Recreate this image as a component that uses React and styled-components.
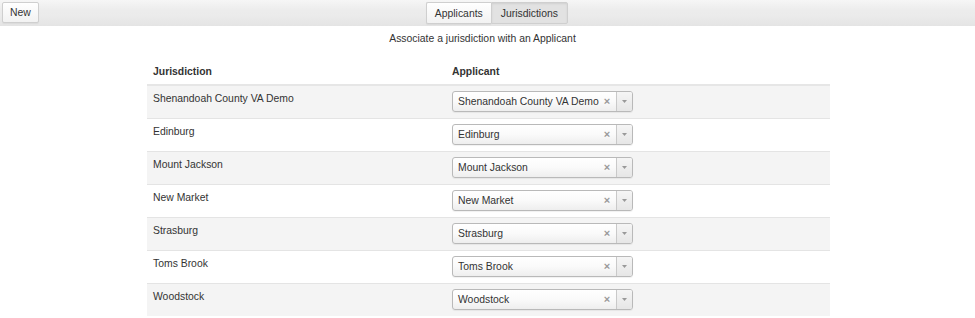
import styled, { createGlobalStyle } from "styled-components";

const GlobalStyle = createGlobalStyle`
  html, body {
    margin: 0;
    padding: 0;
    background: #fff;
  }
  body {
    font-family: "Liberation Sans", Arial, Helvetica, sans-serif;
    font-size: 10.4px;
    color: #333;
  }
`;

const rows = [
  "Shenandoah County VA Demo",
  "Edinburg",
  "Mount Jackson",
  "New Market",
  "Strasburg",
  "Toms Brook",
  "Woodstock",
];

const Styled = {
  TopBar: styled.div`
    height: 26px;
    display: flex;
    align-items: flex-start;
    padding: 2px 0 0 2px;
    box-sizing: border-box;
    background: linear-gradient(#f6f6f6 0%, #ececec 40%, #ebebeb 60%, #e4e4e4 100%);
  `,

  Button: styled.button`
    height: ${({ $tall }) => ($tall ? "22px" : "21px")};
    padding: 0 ${({ $pad }) => $pad || 8}px;
    font-family: inherit;
    font-size: 10.4px;
    color: #333;
    border: 1px solid #cfcfcf;
    border-radius: 2px;
    background: ${({ $active }) =>
      $active ? "#e2e2e2" : "linear-gradient(#ffffff, #f2f2f2)"};
    box-shadow: ${({ $active }) =>
      $active ? "inset 0 1px 2px rgba(0,0,0,0.08)" : "0 1px 1px rgba(0,0,0,0.05)"};
    cursor: pointer;
  `,

  Tabs: styled.div`
    display: flex;
    margin-left: 387px;

    button:first-child {
      border-radius: 2px 0 0 2px;
      border-right: none;
    }
    button:last-child {
      border-radius: 0 2px 2px 0;
    }
  `,

  Subtitle: styled.div`
    text-align: center;
    padding-top: 6px;
    line-height: 14px;
    padding-right: 10px;
  `,

  Table: styled.table`
    margin: 14px 0 0 147px;
    width: 683px;
    border-collapse: collapse;
    table-layout: fixed;

    th {
      text-align: left;
      font-weight: bold;
      height: 25px;
      padding: 0 6px;
      line-height: 14px;
      border-bottom: 2px solid #e6e6e6;
      box-sizing: border-box;
    }
    th:first-child {
      width: 299px;
    }
  `,

  Row: styled.tr`
    height: 33px;
    border-top: 1px solid #e4e4e4;
    background: ${({ $striped }) => ($striped ? "#f4f4f4" : "#fff")};

    td {
      vertical-align: top;
      padding: 6px 6px 0;
      line-height: 14px;
    }
    td.select-cell {
      padding-top: 5px;
    }
  `,

  Select: styled.div`
    width: 181px;
    height: 21px;
    box-sizing: border-box;
    display: flex;
    align-items: stretch;
    border: 1px solid #b9b9b9;
    border-radius: 3px;
    background: linear-gradient(#ffffff 0%, #fafafa 50%, #eeeeee 100%);
    box-shadow: 0 1px 1px rgba(0, 0, 0, 0.06);

    .value {
      flex: 1;
      padding-left: 5px;
      line-height: 19px;
      color: #333;
      white-space: nowrap;
      overflow: hidden;
    }
    .clear {
      width: 14px;
      line-height: 19px;
      font-size: 11px;
      font-weight: bold;
      color: #999;
      text-align: center;
      margin-right: 2px;
    }
    .arrow {
      width: 15px;
      border-left: 1px solid #c9c9c9;
      display: flex;
      align-items: center;
      justify-content: center;
      background: linear-gradient(#f5f5f5, #e6e6e6);
      border-radius: 0 2px 2px 0;
    }
  `,
};

function ApplicantSelect({ value }) {
  return (
    <Styled.Select>
      <div className="value">{value}</div>
      <div className="clear">×</div>
      <div className="arrow">
        <svg width="5" height="3" viewBox="0 0 5 3">
          <path d="M0 0 L5 0 L2.5 3 Z" fill="#999" />
        </svg>
      </div>
    </Styled.Select>
  );
}

export default function App() {
  return (
    <>
      <GlobalStyle />
      <Styled.TopBar>
        <Styled.Button $pad={7}>New</Styled.Button>
        <Styled.Tabs>
          <Styled.Button $tall $pad={8}>Applicants</Styled.Button>
          <Styled.Button $tall $active $pad={9}>Jurisdictions</Styled.Button>
        </Styled.Tabs>
      </Styled.TopBar>
      <Styled.Subtitle>Associate a jurisdiction with an Applicant</Styled.Subtitle>
      <Styled.Table>
        <thead>
          <tr>
            <th>Jurisdiction</th>
            <th>Applicant</th>
          </tr>
        </thead>
        <tbody>
          {rows.map((name, i) => (
            <Styled.Row key={name} $striped={i % 2 === 0}>
              <td>{name}</td>
              <td className="select-cell">
                <ApplicantSelect value={name} />
              </td>
            </Styled.Row>
          ))}
        </tbody>
      </Styled.Table>
    </>
  );
}
